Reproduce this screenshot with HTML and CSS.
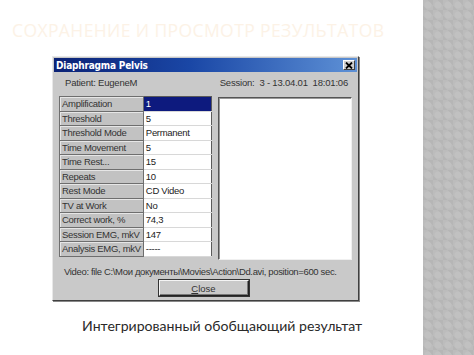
FILE: index.html
```html
<!DOCTYPE html>
<html>
    <head lang="ru">
        <meta charset="UTF-8">
        <title>Сохранение и просмотр результатов</title>
        <link rel="stylesheet" href="styles.css">
    </head>
    <body>
        <div class="page">
            <div class="slide">
                <h1 class="heading">СОХРАНЕНИЕ И ПРОСМОТР РЕЗУЛЬТАТОВ</h1>
                <div class="dialog">
                    <div class="titlebar">
                        <span class="title">Diaphragma Pelvis</span>
                        <span class="close">
                            <svg width="8" height="7" viewBox="0 0 8 7"><path d="M1 0.5 L7 6.5 M7 0.5 L1 6.5" stroke="#000" stroke-width="1.8"/></svg>
                        </span>
                    </div>
                    <div class="body">
                        <div class="info">
                            <span>Patient: EugeneM</span>
                            <span>Session:&nbsp; 3 - 13.04.01&nbsp; 18:01:06</span>
                        </div>
                        <div class="panels">
                            <table class="params">
                                <tr class="selected"><th>Amplification</th><td>1</td></tr>
                                <tr><th>Threshold</th><td>5</td></tr>
                                <tr><th>Threshold Mode</th><td>Permanent</td></tr>
                                <tr><th>Time Movement</th><td>5</td></tr>
                                <tr><th>Time Rest...</th><td>15</td></tr>
                                <tr><th>Repeats</th><td>10</td></tr>
                                <tr><th>Rest Mode</th><td>CD Video</td></tr>
                                <tr><th>TV at Work</th><td>No</td></tr>
                                <tr><th>Correct work, %</th><td>74,3</td></tr>
                                <tr><th>Session EMG, mkV</th><td>147</td></tr>
                                <tr><th>Analysis EMG, mkV</th><td>-----</td></tr>
                            </table>
                            <div class="view"></div>
                        </div>
                        <div class="video">Video: file C:\Мои документы\Movies\Action\Dd.avi, position=600 sec.</div>
                        <div class="actions">
                            <button class="btn"><u>C</u>lose</button>
                        </div>
                    </div>
                </div>
                <p class="caption">Интегрированный обобщающий результат</p>
            </div>
            <div class="side"></div>
        </div>
    </body>
</html>
```

FILE: styles.css
```css
*{
    margin:0;
    padding:0;
    box-sizing:border-box;
}
body{
    background:#fff;
    font-family:"Liberation Sans", Arial, sans-serif;
}
.page{
    display:flex;
    width:474px;
    height:355px;
}
.slide{
    width:423px;
    display:flex;
    flex-direction:column;
}
.heading{
    font-family:"Open Sans", sans-serif;
    font-weight:400;
    font-size:17.5px;
    letter-spacing:0.4px;
    color:#fcf2e6;
    padding:18px 0 0 12px;
    height:56px;
    white-space:nowrap;
}
.side{
    flex:1;
    background-color:#bcbcbc;
    background-image:
        radial-gradient(circle at 50% 50%, rgba(255,255,255,0.08) 0 3px, transparent 4px),
        linear-gradient(45deg, rgba(0,0,0,0.03) 25%, transparent 25%, transparent 75%, rgba(0,0,0,0.03) 75%);
    background-size:10px 10px, 10px 10px;
}
.dialog{
    margin-left:52px;
    width:307px;
    height:245px;
    background:#c9c9c9;
    border:1px solid;
    border-color:#e8e8e8 #404040 #404040 #e8e8e8;
    box-shadow:1px 1px 0 #888;
    padding:1px;
    display:flex;
    flex-direction:column;
}
.titlebar{
    height:14px;
    background:linear-gradient(to right, #0b2275 0%, #1a47a6 45%, #5e91d6 100%);
    display:flex;
    align-items:center;
    justify-content:space-between;
    padding:0 2px 0 2px;
}
.title{
    color:#fff;
    font-size:10px;
    font-weight:bold;
    font-family:"DejaVu Sans Condensed", "Liberation Sans", sans-serif;
    letter-spacing:-0.2px;
}
.close{
    width:12px;
    height:10px;
    background:#cfcfcf;
    border:1px solid;
    border-color:#fff #404040 #404040 #fff;
    display:flex;
    align-items:center;
    justify-content:center;
}
.body{
    flex:1;
    padding:0 5px 0 5px;
    font-size:9.5px;
    color:#222;
    display:flex;
    flex-direction:column;
}
.info{
    display:flex;
    justify-content:space-between;
    padding:5px 4px 0 6px;
    height:24px;
    color:#333;
    font-size:9.5px;
    letter-spacing:-0.2px;
}
.panels{
    display:flex;
    gap:6px;
    height:164px;
}
.params{
    border-collapse:collapse;
    width:154px;
    align-self:flex-start;
    border:1px solid #5a5a5a;
}
.params th,
.params td{
    height:14.5px;
    font-weight:normal;
    text-align:left;
    padding:0 2px;
    white-space:nowrap;
    font-size:9.5px;
    letter-spacing:-0.3px;
}
.params th{
    width:78px;
    background:#c2c2c2;
    color:#333;
    border:1px solid #6e6e6e;
    box-shadow:inset 1px 1px 0 #e6e6e6;
}
.params td{
    background:#fff;
    border-bottom:1px solid #d8d8d8;
    border-left:1px solid #444;
    color:#222;
}
.params tr.selected td{
    background:#0d1a7e;
    color:#fff;
}
.view{
    width:134px;
    height:163px;
    margin-top:1px;
    background:#fff;
    border:1px solid;
    border-color:#555 #f0f0f0 #f0f0f0 #555;
    box-shadow:inset 1px 1px 0 #999;
}
.video{
    padding:6px 0 0 5px;
    height:20px;
    font-size:9.5px;
    letter-spacing:-0.35px;
    color:#333;
    white-space:nowrap;
}
.actions{
    display:flex;
    justify-content:center;
}
.btn{
    width:90px;
    height:16px;
    margin-left:-4px;
    background:#c9c9c9;
    border:1px solid;
    border-color:#f4f4f4 #222 #222 #f4f4f4;
    box-shadow:inset -1px -1px 0 #777, 0 0 0 1px #333;
    font-family:"Liberation Sans", Arial, sans-serif;
    font-size:9.5px;
    color:#333;
}
.caption{
    margin-top:16px;
    padding-left:82px;
    font-family:Lato, sans-serif;
    font-size:14.1px;
    color:#2a2a2a;
    white-space:nowrap;
}
```
